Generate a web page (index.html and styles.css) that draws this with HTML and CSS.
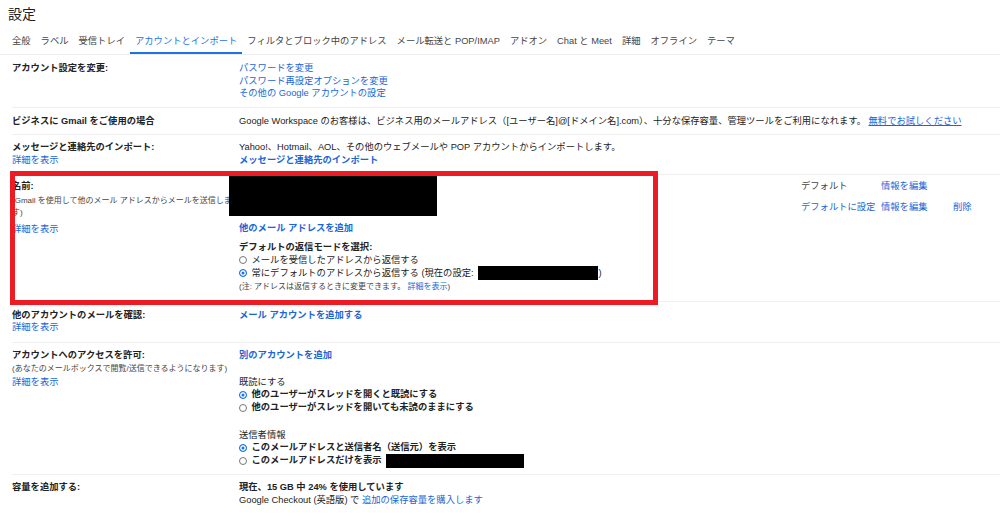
FILE: index.html
```html
<!DOCTYPE html>
<html lang="ja">
<head>
    <meta charset="UTF-8">
    <meta name="viewport" content="width=device-width, initial-scale=1.0">
    <title>設定 - Gmail</title>
    <link rel="stylesheet" href="styles.css">
</head>
<body>

<div class="page">
    <h1 class="title">設定</h1>

    <!-- Tabs -->
    <nav class="tabs">
        <a class="tab">全般</a>
        <a class="tab">ラベル</a>
        <a class="tab">受信トレイ</a>
        <a class="tab active">アカウントとインポート</a>
        <a class="tab">フィルタとブロック中のアドレス</a>
        <a class="tab">メール転送と POP/IMAP</a>
        <a class="tab">アドオン</a>
        <a class="tab">Chat と Meet</a>
        <a class="tab">詳細</a>
        <a class="tab">オフライン</a>
        <a class="tab">テーマ</a>
    </nav>

    <div class="rows">
        <!-- Account settings -->
        <div class="row">
            <div class="label"><b>アカウント設定を変更:</b></div>
            <div class="value">
                <div><a class="link">パスワードを変更</a></div>
                <div><a class="link">パスワード再設定オプションを変更</a></div>
                <div><a class="link">その他の Google アカウントの設定</a></div>
            </div>
        </div>

        <!-- Business -->
        <div class="row">
            <div class="label"><b>ビジネスに Gmail をご使用の場合</b></div>
            <div class="value nowrap">
                Google Workspace のお客様は、ビジネス用のメールアドレス（[ユーザー名]@[ドメイン名].com）、十分な保存容量、管理ツールをご利用になれます。 <a class="link underline">無料でお試しください</a>
            </div>
        </div>

        <!-- Import -->
        <div class="row row-import">
            <div class="label">
                <b>メッセージと連絡先のインポート:</b>
                <div><a class="link">詳細を表示</a></div>
            </div>
            <div class="value">
                <div>Yahoo!、Hotmail、AOL、その他のウェブメールや POP アカウントからインポートします。</div>
                <div><a class="link bold">メッセージと連絡先のインポート</a></div>
            </div>
        </div>

        <!-- Send mail as -->
        <div class="row row-name">
            <div class="label label-name">
                <b>名前:</b>
                <div class="hint hint-name">(Gmail を使用して他のメール アドレスからメールを送信します)</div>
                <div class="more"><a class="link">詳細を表示</a></div>
            </div>
            <div class="value">
                <div class="addr">
                    <div class="redact-name"></div>
                    <span class="status">デフォルト</span>
                    <a class="link">情報を編集</a>
                    <span></span>
                    <a class="link addr-row2">デフォルトに設定</a>
                    <a class="link">情報を編集</a>
                    <a class="link">削除</a>
                </div>
                <div class="add-link"><a class="link bold">他のメール アドレスを追加</a></div>
                <div class="group-title bold">デフォルトの返信モードを選択:</div>
                <label class="opt"><input type="radio" name="reply">メールを受信したアドレスから返信する</label>
                <label class="opt"><input type="radio" name="reply" checked>常にデフォルトのアドレスから返信する (現在の設定:<span class="redact redact-reply"></span>)</label>
                <div class="hint hint-note">(注: アドレスは返信するときに変更できます。 <a class="link">詳細を表示</a>)</div>
            </div>
        </div>

        <!-- Check mail from other accounts -->
        <div class="row row-check">
            <div class="label">
                <b>他のアカウントのメールを確認:</b>
                <div><a class="link">詳細を表示</a></div>
            </div>
            <div class="value">
                <div><a class="link bold">メール アカウントを追加する</a></div>
            </div>
        </div>

        <!-- Grant access -->
        <div class="row row-access">
            <div class="label">
                <b>アカウントへのアクセスを許可:</b>
                <div class="hint hint-access">(あなたのメールボックスで閲覧/送信できるようになります)</div>
                <div class="more-access"><a class="link">詳細を表示</a></div>
            </div>
            <div class="value">
                <div><a class="link bold">別のアカウントを追加</a></div>
                <div class="group-gap">既読にする</div>
                <label class="opt bold"><input type="radio" name="read" checked>他のユーザーがスレッドを開くと既読にする</label>
                <label class="opt bold"><input type="radio" name="read">他のユーザーがスレッドを開いても未読のままにする</label>
                <div class="group-gap">送信者情報</div>
                <label class="opt bold"><input type="radio" name="sender" checked>このメールアドレスと送信者名（送信元）を表示</label>
                <label class="opt bold"><input type="radio" name="sender">このメールアドレスだけを表示<span class="redact redact-sender"></span></label>
            </div>
        </div>

        <!-- Storage -->
        <div class="row row-storage">
            <div class="label"><b>容量を追加する:</b></div>
            <div class="value">
                <div class="bold">現在、15 GB 中 24% を使用しています</div>
                <div>Google Checkout (英語版) で <a class="link">追加の保存容量を購入します</a></div>
            </div>
        </div>
    </div>

    <!-- annotation frame -->
    <div class="highlight"></div>
</div>

</body>
</html>
```

FILE: styles.css
```css
body {
    margin: 0;
    font-family: "Liberation Sans", "Noto Sans CJK JP", sans-serif;
    font-size: 9.3px;
    line-height: 12.5px;
    color: #222;
    background: #fff;
}
.page {
    position: relative;
    width: 1000px;
    height: 516px;
    overflow: hidden;
}
.title {
    margin: 0;
    padding: 5px 8px 0;
    font-size: 14px;
    line-height: 18px;
    font-weight: 400;
    color: #202124;
}
.tabs {
    display: flex;
    margin-top: 6px;
    padding-left: 7px;
    border-bottom: 1px solid #eceef0;
}
.tab {
    padding: 6px 5px 5px;
    line-height: 12px;
    border-bottom: 2px solid transparent;
    color: #444;
    white-space: nowrap;
}
.tab.active {
    color: #1a73e8;
    border-bottom-color: #1a73e8;
}
.rows {
    margin-left: 12px;
}
.row {
    display: grid;
    grid-template-columns: 227px 1fr;
    padding: 7px 0;
    border-top: 1px solid #efefef;
}
.row:first-child {
    border-top: 0;
}
.label {
    padding-right: 7px;
}
.label b,
.bold {
    font-weight: 700;
}
.nowrap {
    white-space: nowrap;
}
.link {
    color: #1a66d6;
    text-decoration: none;
    cursor: pointer;
}
.link.underline {
    text-decoration: underline;
}
.hint {
    font-size: 8px;
    line-height: 12px;
    color: #444;
}

/* per-row spacing */
.row-import {
    padding: 6px 0 8px;
}
.row-name {
    padding: 1px 0 8px;
}
.label-name {
    padding-top: 4px;
}
.hint-name {
    margin-top: 2px;
}
.more {
    margin-top: 4px;
}
.row-check {
    padding: 7px 0 8px;
}
.row-access,
.row-storage {
    padding: 6px 0 7px;
}
.hint-access {
    margin-top: 1.5px;
}
.more-access {
    margin-top: 1px;
}

/* send mail as table */
.addr {
    display: grid;
    grid-template-columns: 1fr 80px 72px 47px;
    grid-auto-rows: 21px;
    align-items: center;
}
.redact-name {
    grid-row: 1 / span 2;
    grid-column: 1;
    align-self: start;
    width: 208px;
    height: 40px;
    margin-left: -10px;
    background: #000;
}
.status {
    color: #444;
}
.addr-row2 {
    grid-column: 2;
}
.add-link {
    margin-top: 4px;
}
.group-title {
    margin-top: 6.5px;
}
.group-gap {
    margin-top: 14.5px;
}
.opt {
    display: flex;
    align-items: center;
    height: 13px;
    white-space: nowrap;
}
.opt input {
    appearance: none;
    width: 8px;
    height: 8px;
    margin: 0 4.5px 0 0;
    border: 1px solid #777;
    border-radius: 50%;
    background: #fff;
    box-sizing: border-box;
}
.opt input:checked {
    border-color: #1a73e8;
    background: #1a73e8;
    box-shadow: inset 0 0 0 1.5px #fff;
}
.hint-note {
    margin-top: 1px;
}
.redact {
    display: inline-block;
    height: 14px;
    background: #000;
}
.redact-reply {
    width: 120px;
    margin: 0 1px 0 4px;
}
.redact-sender {
    width: 138px;
    margin-left: 4px;
}

.highlight {
    position: absolute;
    left: 10px;
    top: 171px;
    width: 648px;
    height: 134px;
    border: 5px solid #ed1c24;
    box-sizing: border-box;
}
```
